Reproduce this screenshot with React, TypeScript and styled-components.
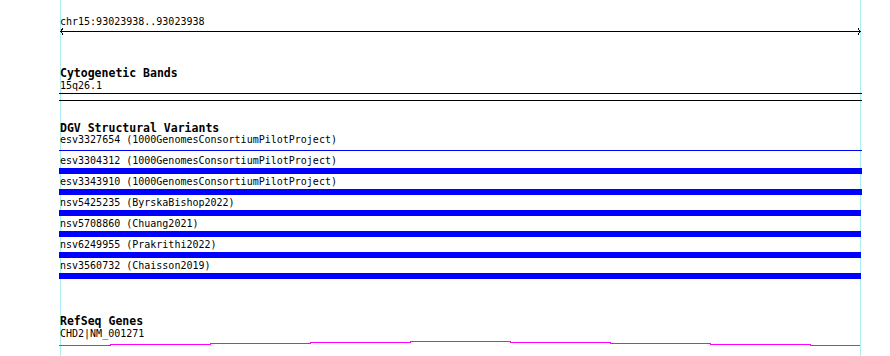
import styled, { createGlobalStyle } from 'styled-components';

const GlobalStyle = createGlobalStyle`
  html, body {
    margin: 0;
    padding: 0;
    background: #ffffff;
  }
  body {
    font-family: 'DejaVu Sans Mono', 'Liberation Mono', monospace;
    color: #000;
  }
`;

const GUIDE = '#afeeee';

const Page = styled.div`
  padding-left: 59px;
`;

const Panel = styled.div`
  display: flex;
  flex-direction: column;
  width: 803px;
  min-height: 100vh;
  background:
    linear-gradient(${GUIDE}, ${GUIDE}) 1px 0 / 1px 100% no-repeat,
    linear-gradient(${GUIDE}, ${GUIDE}) 801px 0 / 1px 100% no-repeat;
`;

const RulerLabel = styled.div`
  margin-top: 15px;
  padding-left: 1px;
  font-size: 10px;
  line-height: 13px;
`;

const RulerArrow = styled.svg`
  display: block;
  width: 803px;
  height: 7px;
`;

const TrackTitle = styled.div<{ $gap: number }>`
  margin-top: ${(p) => p.$gap}px;
  padding-left: 1px;
  font-size: 11.5px;
  font-weight: bold;
  line-height: 12px;
`;

const FeatureLabel = styled.div<{ $gap?: number }>`
  margin-top: ${(p) => p.$gap ?? 0}px;
  padding-left: 1px;
  font-size: 10px;
  line-height: 12px;
  white-space: pre;
`;

const Rule = styled.div<{ $gap: number }>`
  margin-top: ${(p) => p.$gap}px;
  height: 1px;
  background: #000;
`;

const VariantRow = styled.div`
  display: flex;
  flex-direction: column;
  height: 21px;
`;

const BarSlot = styled.div`
  display: flex;
  flex-direction: column;
  justify-content: center;
  height: 6px;
  margin-top: 1px;
`;

const Bar = styled.div<{ $thin?: boolean; $width: number }>`
  width: ${(p) => p.$width}px;
  height: ${(p) => (p.$thin ? 1 : 6)}px;
  background: #0000ff;
`;

const GeneTrace = styled.svg`
  display: block;
  width: 803px;
  height: 8px;
`;

const variants = [
  { id: 'esv3327654', src: '1000GenomesConsortiumPilotProject', thin: true, w: 803 },
  { id: 'esv3304312', src: '1000GenomesConsortiumPilotProject', w: 803 },
  { id: 'esv3343910', src: '1000GenomesConsortiumPilotProject', w: 803 },
  { id: 'nsv5425235', src: 'ByrskaBishop2022', w: 802 },
  { id: 'nsv5708860', src: 'Chuang2021', w: 802 },
  { id: 'nsv6249955', src: 'Prakrithi2022', w: 802 },
  { id: 'nsv3560732', src: 'Chaisson2019', w: 802 },
];

// stepped coverage line of the gene model
const levels = [5.5, 4.5, 3.5, 2.5, 1.5, 2.5, 3.5, 4.5, 5.5];
const tracePath = levels
  .map((y, i) => {
    const x0 = i === 0 ? 0 : 51 + (i - 1) * 100;
    const x1 = i === levels.length - 1 ? 801 : 51 + i * 100;
    return `${i === 0 ? 'M' : 'L'}${x0},${y} L${x1},${y}`;
  })
  .join(' ');

export default function App() {
  return (
    <Page>
      <GlobalStyle />
      <Panel>
        <RulerLabel>chr15:93023938..93023938</RulerLabel>
        <RulerArrow viewBox="0 0 803 7" shapeRendering="crispEdges">
          <line x1="1" y1="3.5" x2="802" y2="3.5" stroke="#000" strokeWidth="1" />
          <polyline points="4,0.5 1.5,3.5 4,6.5" fill="none" stroke="#000" strokeWidth="1" />
          <polyline points="799,0.5 801.5,3.5 799,6.5" fill="none" stroke="#000" strokeWidth="1" />
        </RulerArrow>

        <TrackTitle $gap={32}>Cytogenetic Bands</TrackTitle>
        <FeatureLabel $gap={1}>15q26.1</FeatureLabel>
        <Rule $gap={1} />
        <Rule $gap={6} />

        <TrackTitle $gap={21}>DGV Structural Variants</TrackTitle>
        {variants.map((v) => (
          <VariantRow key={v.id}>
            <FeatureLabel>{`${v.id} (${v.src})`}</FeatureLabel>
            <BarSlot>
              <Bar $thin={v.thin} $width={v.w} />
            </BarSlot>
          </VariantRow>
        ))}

        <TrackTitle $gap={34}>RefSeq Genes</TrackTitle>
        <FeatureLabel $gap={1}>CHD2|NM_001271</FeatureLabel>
        <GeneTrace viewBox="0 0 803 8" shapeRendering="crispEdges">
          <path d={tracePath} fill="none" stroke="#ff00ff" strokeWidth="1" />
        </GeneTrace>
      </Panel>
    </Page>
  );
}
